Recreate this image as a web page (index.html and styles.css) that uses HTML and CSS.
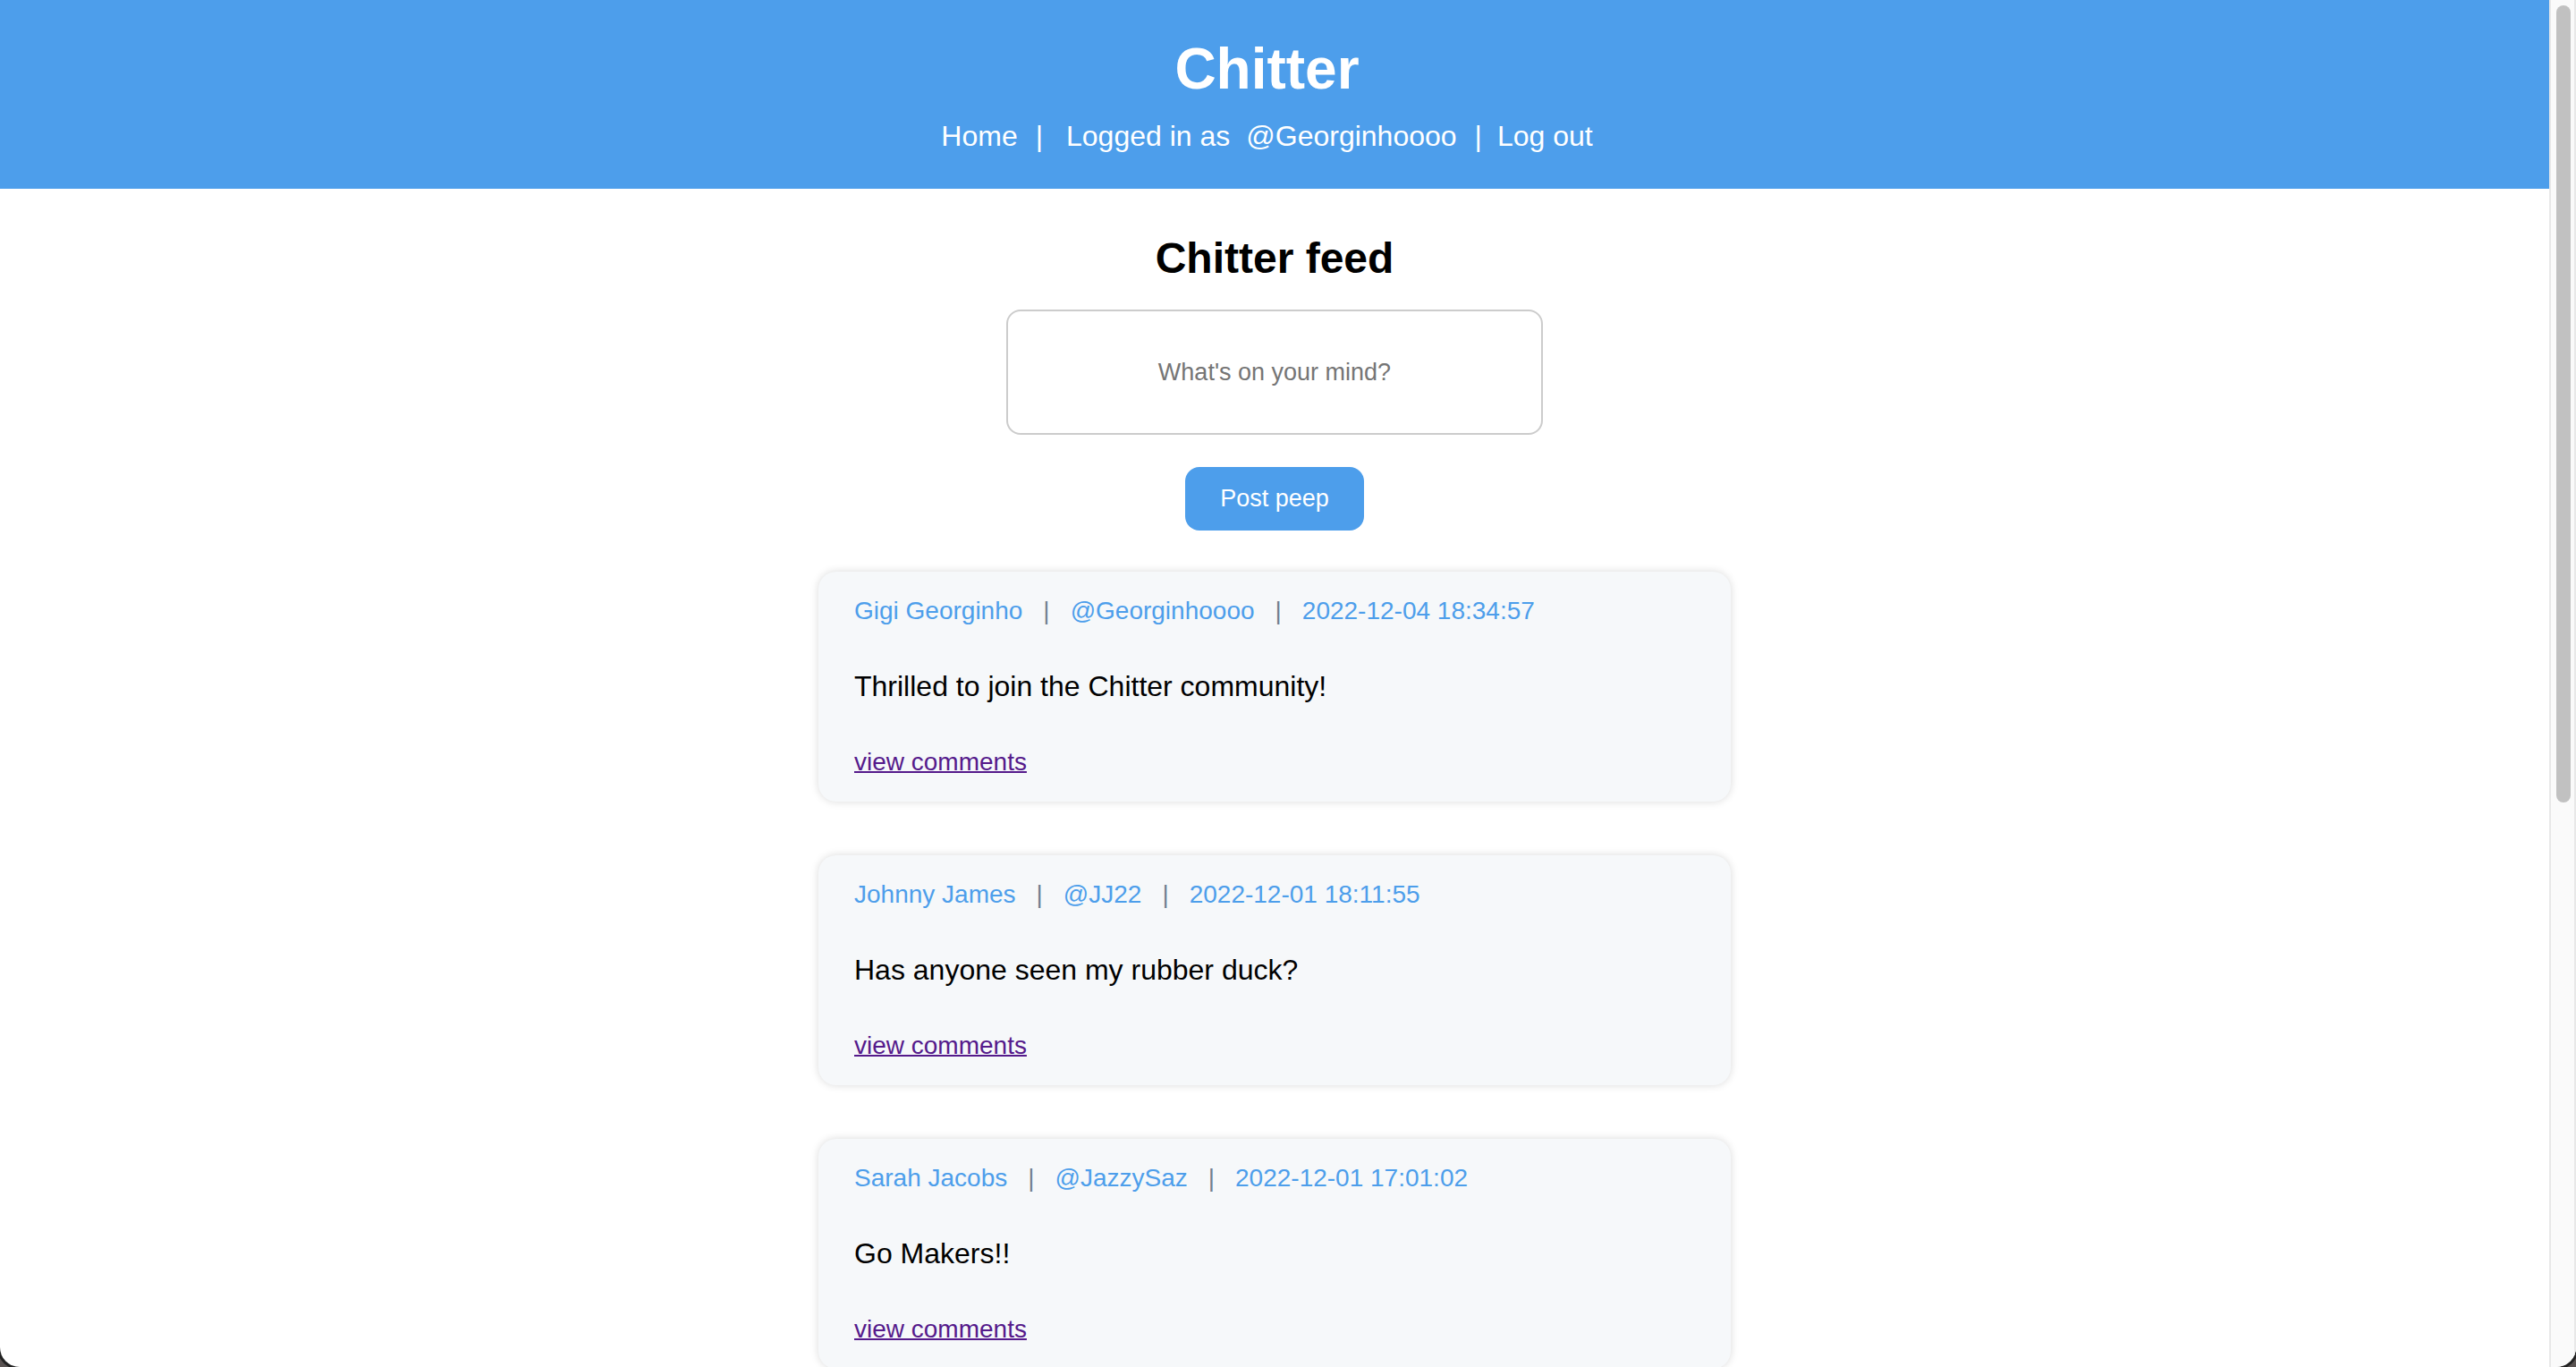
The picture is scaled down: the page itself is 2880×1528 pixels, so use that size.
FILE: index.html
```html
<!DOCTYPE html>
<html lang="en">
<head>
  <meta charset="utf-8">
  <title>Chitter</title>
  <link rel="stylesheet" href="styles.css">
</head>
<body>
  <div class="window">
    <div class="page">
      <header class="banner">
        <h1 class="brand">Chitter</h1>
        <nav class="nav">
          <a href="#home">Home</a>
          <span class="nav-bar">|</span>
          <span class="nav-user"><span>Logged in as</span> <span>@Georginhoooo</span></span>
          <span class="nav-bar">|</span>
          <a href="#logout">Log out</a>
        </nav>
      </header>
      <main class="feed">
        <h2 class="feed-title">Chitter feed</h2>
        <form class="composer">
          <input class="composer-input" type="text" placeholder="What's on your mind?" aria-label="What's on your mind?">
          <button class="composer-button" type="button">Post peep</button>
        </form>
        <article class="peep">
          <div class="peep-meta"><span>Gigi Georginho</span><span class="bar">|</span><span>@Georginhoooo</span><span class="bar">|</span><time>2022-12-04 18:34:57</time></div>
          <p class="peep-text">Thrilled to join the Chitter community!</p>
          <a class="peep-link" href="#comments-3">view comments</a>
        </article>
        <article class="peep">
          <div class="peep-meta"><span>Johnny James</span><span class="bar">|</span><span>@JJ22</span><span class="bar">|</span><time>2022-12-01 18:11:55</time></div>
          <p class="peep-text">Has anyone seen my rubber duck?</p>
          <a class="peep-link" href="#comments-2">view comments</a>
        </article>
        <article class="peep">
          <div class="peep-meta"><span>Sarah Jacobs</span><span class="bar">|</span><span>@JazzySaz</span><span class="bar">|</span><time>2022-12-01 17:01:02</time></div>
          <p class="peep-text">Go Makers!!</p>
          <a class="peep-link" href="#comments-1">view comments</a>
        </article>
      </main>
    </div>
    <div class="scrollbar"><div class="scrollbar-thumb"></div></div>
  </div>
</body>
</html>
```
FILE: styles.css
```css
* {
  box-sizing: border-box;
}

body {
  margin: 0;
  background: #5a5352;
  color: #000;
  font-family: Arial, "Liberation Sans", sans-serif;
  font-size: 28px;
  line-height: 32px;
}

.window {
  display: flex;
  height: 100vh;
  overflow: hidden;
  background: #fff;
  border-radius: 0 0 22px 22px;
  box-shadow: 0 0 0 3px #222;
}

.page {
  flex: 1;
  overflow: hidden;
}

.banner {
  padding: 40px 17px 40px 0;
  background: #4d9eeb;
  color: #fff;
  text-align: center;
}

.brand {
  margin: 0 0 20px;
  font-size: 64px;
  line-height: 74px;
}

.nav {
  display: flex;
  justify-content: center;
  gap: 17px;
  font-size: 32px;
  line-height: 37px;
}

.nav a {
  color: inherit;
  text-decoration: none;
}

.nav-bar {
  margin-left: 3px;
}

.nav-user {
  display: flex;
  gap: 18px;
}

.nav-bar + .nav-user {
  margin-left: 9px;
}

.feed {
  display: flex;
  flex-direction: column;
  align-items: center;
  padding-top: 50px;
}

.feed-title {
  margin: 0 0 30px;
  font-size: 48px;
  line-height: 55px;
}

.composer {
  display: flex;
  flex-direction: column;
  align-items: center;
  gap: 36px;
  margin-bottom: 46px;
}

.composer-input {
  width: 600px;
  height: 140px;
  padding: 0 40px;
  border: 2px solid #ccc;
  border-radius: 16px;
  background: #fff;
  font: inherit;
  font-size: 27px;
  text-align: center;
}

.composer-input::placeholder {
  color: #757575;
}

.composer-button {
  padding: 20px 39px;
  border: 0;
  border-radius: 16px;
  background: #4d9eeb;
  color: #fff;
  font: inherit;
  font-size: 27px;
  line-height: 31px;
}

.peep {
  width: 1020px;
  max-width: 100%;
  margin-bottom: 60px;
  padding: 28px 40px;
  border-radius: 20px;
  background: #f6f8fa;
  box-shadow: 0 0 10px rgba(0, 0, 0, 0.15);
}

.peep-meta {
  display: flex;
  gap: 23px;
  color: #4d9eeb;
}

.bar {
  color: #708090;
}

.peep-text {
  margin: 50px 0 51px;
  font-size: 32px;
  line-height: 36px;
}

.peep-link {
  display: block;
  width: fit-content;
  color: #551a8b;
  text-decoration-thickness: 2px;
}

.scrollbar {
  width: 30px;
  padding: 6px 4px 6px 6px;
  border: solid #e8e8e8;
  border-width: 0 2px;
  background: #fafafa;
}

.scrollbar-thumb {
  width: 16px;
  height: 891px;
  border-radius: 8px;
  background: #c1c1c1;
}
```
